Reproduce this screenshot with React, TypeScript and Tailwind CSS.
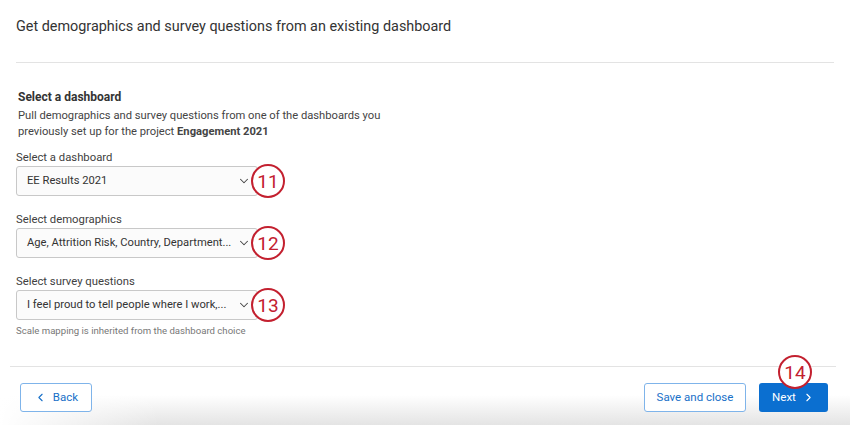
import { ChevronDown, ChevronLeft, ChevronRight } from "lucide-react";

interface StepBadgeProps {
    n: number,
    className?: string
}

// red numbered callout circle
const StepBadge = (props: StepBadgeProps): JSX.Element => {
    return (
        <div
            className={`flex items-center justify-center w-[34px] h-[34px] rounded-full border-[2.5px] border-[#c3202f] bg-white text-[#c3202f] text-[19px] leading-none ${props.className ?? ""}`}
        >
            {props.n}
        </div>
    );
};

interface SelectFieldProps {
    label: string,
    value: string,
    step: number
}

const SelectField = (props: SelectFieldProps): JSX.Element => {
    return (
        <div className="flex flex-col">
            <div className="text-[11.3px] leading-[14px] text-[#404040] mb-[1px]">{props.label}</div>
            <div className="flex items-center h-[30px]">
                <div className="flex items-center justify-between w-[242px] h-[30px] pl-[10px] pr-[6px] border border-[#c8c8c8] rounded-[3px] bg-[#fbfbfb]">
                    <span className="text-[11.2px] text-[#333] whitespace-nowrap">{props.value}</span>
                    <ChevronDown size={14} strokeWidth={1.8} className="text-[#444] shrink-0 ml-[3px]" />
                </div>
                <StepBadge n={props.step} className="-ml-[7px] -my-[2px]" />
            </div>
        </div>
    );
};

export default function App(): JSX.Element {
    return (
        <div
            className="relative w-[850px] h-[425px] overflow-hidden bg-white"
            style={{ fontFamily: 'Roboto, "Liberation Sans", Arial, sans-serif' }}
        >
            {/* soft shadow along the bottom edge */}
            <div className="absolute left-0 right-0 bottom-0 h-[30px] bg-gradient-to-b from-white to-[#e4e4e4]" />
            <div className="absolute left-0 bottom-0 w-[160px] h-[30px] bg-gradient-to-r from-white to-transparent" />

            <div className="relative flex flex-col h-full">
                <div className="px-4 pt-[16px] h-[62px] text-[14.4px] text-[#333]">
                    Get demographics and survey questions from an existing dashboard
                </div>
                <div className="mx-4 border-t border-[#e3e3e3]" />

                <div className="pl-[18px] pt-[26px]">
                    <div className="text-[12px] leading-[16px] font-bold text-[#333]">Select a dashboard</div>
                    <div className="mt-[3px] text-[11.2px] leading-[16px] text-[#444] w-[400px]">
                        Pull demographics and survey questions from one of the dashboards you
                        <br />
                        previously set up for the project <span className="font-bold">Engagement 2021</span>
                    </div>
                </div>

                <div className="pl-4 pt-[11px] flex flex-col gap-[17px]">
                    <SelectField label="Select a dashboard" value="EE Results 2021" step={11} />
                    <SelectField label="Select demographics" value="Age, Attrition Risk, Country, Department..." step={12} />
                    <div className="flex flex-col">
                        <SelectField label="Select survey questions" value="I feel proud to tell people where I work,..." step={13} />
                        <div className="mt-[5px] text-[9.6px] leading-[12px] text-[#777]">
                            Scale mapping is inherited from the dashboard choice
                        </div>
                    </div>
                </div>

                <div className="mt-auto mb-[13px]">
                    <div className="ml-[10px] mr-[14px] border-t border-[#e3e3e3]" />
                    <div className="flex items-center justify-between pl-5 pr-[22px] pt-4">
                        <button className="flex items-center gap-[6px] h-[29px] w-[72px] justify-center rounded-[3px] border border-[#7fb4ea] bg-white text-[11.5px] text-[#1870c8]">
                            <ChevronLeft size={13} strokeWidth={2} />
                            Back
                        </button>
                        <div className="flex items-center gap-[13px]">
                            <button className="h-[29px] w-[102px] rounded-[3px] border border-[#7fb4ea] bg-white text-[11.5px] text-[#1870c8]">
                                Save and close
                            </button>
                            <div className="relative">
                                <button className="flex items-center justify-center gap-[6px] h-[29px] w-[69px] rounded-[3px] bg-[#0b6fd0] text-[11.5px] text-white">
                                    Next
                                    <ChevronRight size={13} strokeWidth={2} />
                                </button>
                                <StepBadge n={14} className="absolute left-[19px] -top-[28px] w-[33px] h-[33px]" />
                            </div>
                        </div>
                    </div>
                </div>
            </div>
        </div>
    );
}
